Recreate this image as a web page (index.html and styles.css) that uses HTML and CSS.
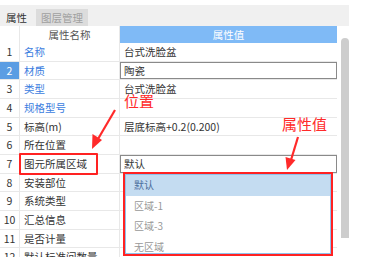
FILE: index.html
```html
<!DOCTYPE html>
<html lang="zh-CN">
<head>
    <meta charset="UTF-8">
    <title>属性</title>
    <link rel="stylesheet" href="styles.css">
</head>
<body>

<div class="panel">
    <div class="tabs">
        <div class="tab active">属性</div>
        <div class="tab">图层管理</div>
    </div>

    <div class="body">
        <div class="grid">
            <div class="row head">
                <div class="num"></div>
                <div class="name center">属性名称</div>
                <div class="value center">属性值</div>
            </div>
            <div class="row"><div class="num">1</div><div class="name link">名称</div><div class="value">台式洗脸盆</div></div>
            <div class="row"><div class="num sel">2</div><div class="name link">材质</div><div class="value"><span class="edit">陶瓷</span></div></div>
            <div class="row"><div class="num">3</div><div class="name link">类型</div><div class="value">台式洗脸盆</div></div>
            <div class="row"><div class="num">4</div><div class="name link">规格型号</div><div class="value"></div></div>
            <div class="row"><div class="num">5</div><div class="name">标高(m)</div><div class="value">层底标高+0.2(0.200)</div></div>
            <div class="row"><div class="num">6</div><div class="name">所在位置</div><div class="value"></div></div>
            <div class="row"><div class="num">7</div><div class="name">图元所属区域</div><div class="value"><span class="edit">默认</span></div></div>
            <div class="row"><div class="num">8</div><div class="name">安装部位</div><div class="value"></div></div>
            <div class="row"><div class="num">9</div><div class="name">系统类型</div><div class="value"></div></div>
            <div class="row"><div class="num">10</div><div class="name">汇总信息</div><div class="value"></div></div>
            <div class="row"><div class="num">11</div><div class="name">是否计量</div><div class="value"></div></div>
            <div class="row"><div class="num">12</div><div class="name">默认标准间数量</div><div class="value"></div></div>
        </div>
        <div class="track"><div class="thumb"></div></div>
    </div>
</div>

<div class="dropdown">
    <div class="item on">默认</div>
    <div class="item">区域-1</div>
    <div class="item">区域-3</div>
    <div class="item">无区域</div>
</div>

<div class="mark-box"></div>
<span class="note note-pos">位置</span>
<span class="note note-val">属性值</span>

<svg class="arrows" width="370" height="257" viewBox="0 0 370 257">
    <line x1="115" y1="110" x2="98" y2="139" stroke="#ff2a2a" stroke-width="2.2"/>
    <polygon points="92,149 92.5,134 102,140" fill="#ff2a2a"/>
    <line x1="298" y1="137" x2="291" y2="160" stroke="#ff2a2a" stroke-width="2.2"/>
    <polygon points="287,170 285.5,157 295.5,160" fill="#ff2a2a"/>
</svg>

</body>
</html>
```

FILE: styles.css
```css
body{margin:0;background:#fff;font-family:"Noto Sans CJK SC","Noto Sans",sans-serif;font-size:10.5px;color:#333;width:370px;height:257px;overflow:hidden;position:relative;}

.panel{width:349px;padding-top:5px;}
.tabs{display:flex;height:21px;background:#f0f0f0;align-items:flex-end;}
.tab{height:17px;line-height:17px;width:52px;text-align:center;color:#a0a0a0;background:#dcdcdc;margin-left:3px;}
.tab.active{background:#f0f0f0;color:#333;margin-left:0;width:33px;}

.body{display:flex;}
.grid{width:337px;}
.row{display:grid;grid-template-columns:20px 100px 1fr;height:18.67px;border-bottom:1px solid #e8e8e8;box-sizing:border-box;line-height:17px;}
.row.head{height:17px;border-bottom:0;}
.num{text-align:center;color:#333;border-right:1px solid #e8e8e8;}
.num.sel{background:#5b9de3;color:#fff;}
.name{padding-left:4px;border-right:1px solid #e8e8e8;white-space:nowrap;overflow:hidden;}
.value{padding-left:4px;white-space:nowrap;overflow:hidden;}
.center{text-align:center;padding-left:0;}
.head .name{color:#555;}
.head .value{background:#7fbaf6;color:#fff;}
.link{color:#3b7de0;}
.row .value:has(.edit){padding:0;display:flex;}
.edit{flex:1;border:1px solid #8a8a8a;padding-left:3px;line-height:15px;}

.track{width:12px;padding:12px 0 0 4px;box-sizing:border-box;}
.thumb{width:8px;height:200px;background:#cdcdcd;border-radius:4px 4px 0 0;}

.dropdown{position:absolute;left:123px;top:172px;width:210px;height:84px;border:2px solid #f22;box-sizing:border-box;background:#fff;box-shadow:inset 0 0 0 1px #8fc2ec;padding:1px;}
.item{height:20.5px;line-height:20px;padding-left:8px;color:#999;font-size:10px;}
.item.on{background:#c4dcf1;color:#4c6e9c;}

.mark-box{position:absolute;left:19px;top:153px;width:79px;height:22px;border:2px solid #f22;box-sizing:border-box;border-radius:1px;}
.note{position:absolute;color:#ff2a2a;font-size:15px;line-height:15px;}
.note-pos{left:124px;top:93px;}
.note-val{left:282px;top:116px;}
.arrows{position:absolute;left:0;top:0;}
```
